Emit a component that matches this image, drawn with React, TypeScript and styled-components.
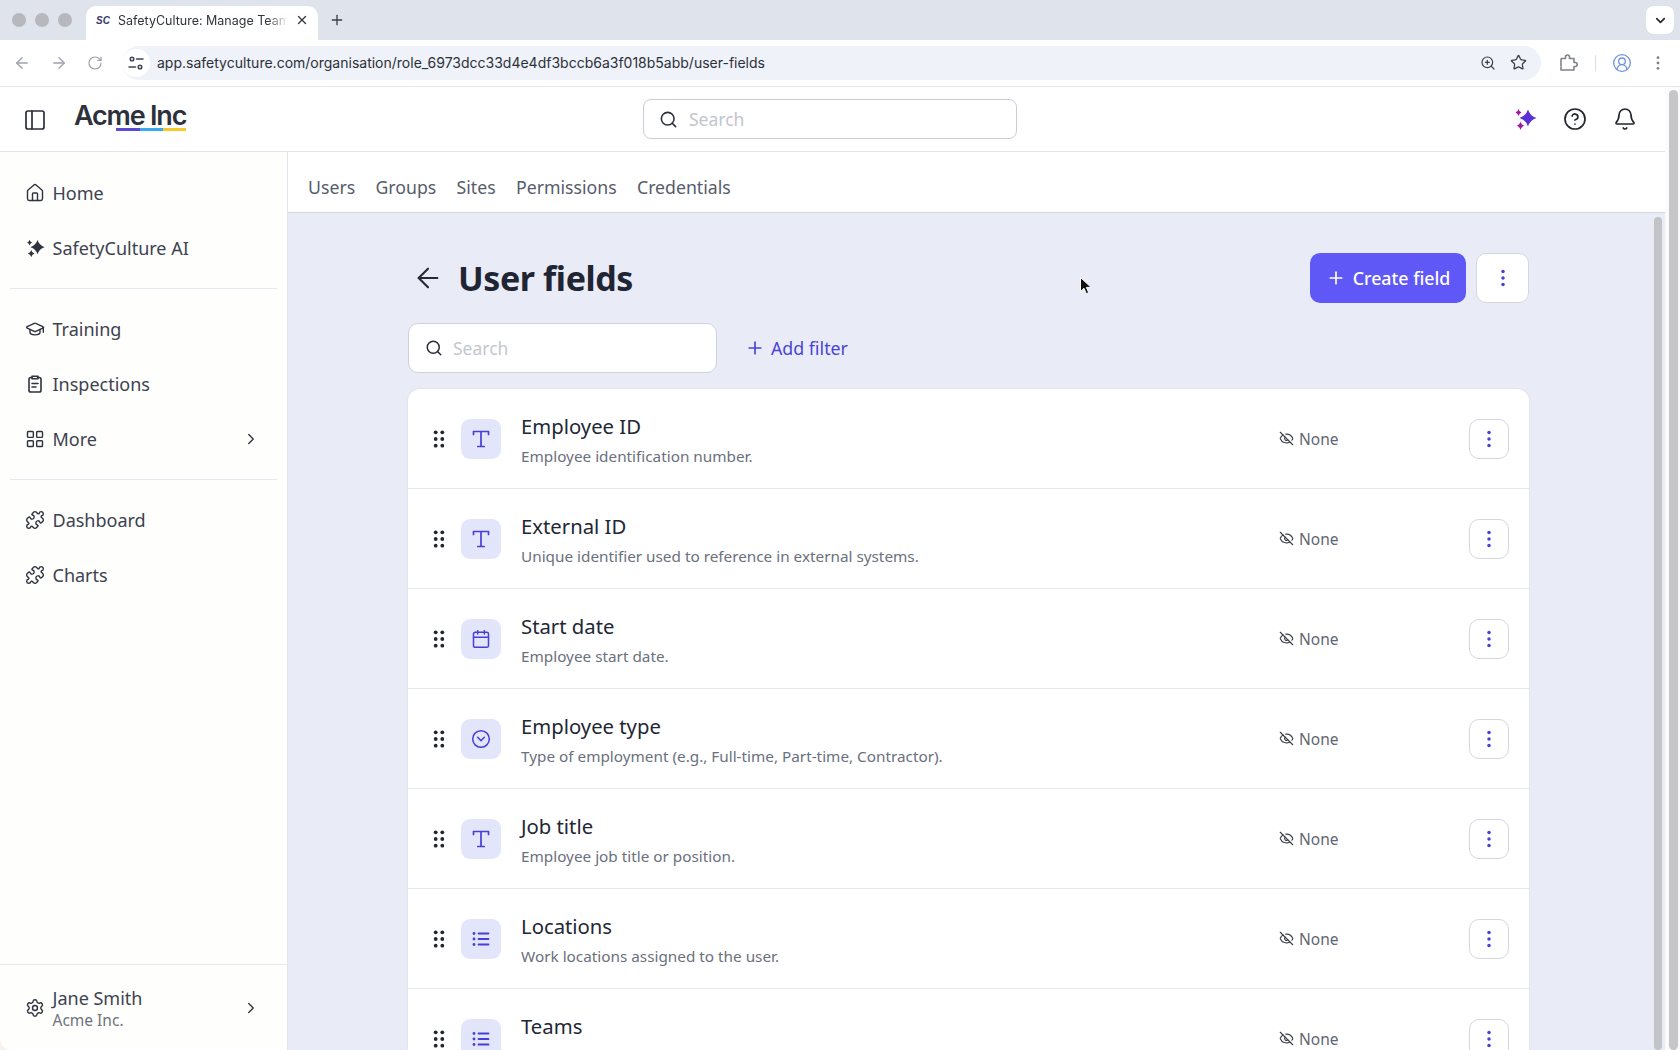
import React from "react";
import styled, { createGlobalStyle } from "styled-components";
import {
  ArrowLeft, ArrowRight, Bell, Calendar, ChevronDown, ChevronRight, CircleChevronDown, CircleHelp, CircleUserRound,
  EyeOff, GraduationCap, House, LayoutGrid, PanelLeft, Plus, Puzzle, RotateCw, Search, Settings,
  Star, X, ZoomIn,
} from "lucide-react";

const Global = createGlobalStyle`
  html, body { margin: 0; padding: 0; height: 100%; overflow: hidden; background: #f6f3ee; }
  #root { height: 100%; }
  * { box-sizing: border-box; }
`;

const Page = styled.div`
  width: 1680px; height: 1050px; display: flex; flex-direction: column; overflow: hidden; position: relative;
  font-family: "Noto Sans", sans-serif; color: #1f2533; background: #fff; border-radius: 0 0 0 12px;
`;

/* browser chrome */
const TabStrip = styled.div`
  height: 40px; flex: none; background: #dfe3ec; display: flex; align-items: flex-end; padding-left: 12px;
`;
const Lights = styled.div`
  display: flex; gap: 9px; align-self: center; width: 74px;
`;
const Light = styled.span`
  width: 14px; height: 14px; border-radius: 50%; background: #b6b8bd;
`;
const BrowserTab = styled.div`
  width: 232px; height: 34px; background: #fff; border-radius: 10px 10px 0 0; display: flex; align-items: center;
  padding: 0 9px 6px 9px; gap: 7px; font: 12.5px "Inter", sans-serif; color: #30343b;
`;
const Favicon = styled.span`
  font: italic 800 10px "Liberation Sans", sans-serif; color: #333a6b; width: 16px; text-align: center;
`;
const TabTitle = styled.span`
  flex: 1; white-space: nowrap; overflow: hidden;
  mask-image: linear-gradient(90deg, #000 88%, transparent);
`;
const NewTab = styled.span`
  display: flex; align-self: center; margin-left: 11px; color: #3a3f47;
`;
const TabMenu = styled.span`
  margin-left: auto; margin-right: 6px; align-self: flex-start; margin-top: 6px; width: 28px; height: 28px; background: #fff;
  border-radius: 8px; display: flex; align-items: center; justify-content: center; color: #23262c;
`;
const Toolbar = styled.div`
  height: 47px; flex: none; background: #fff; border-bottom: 1px solid #e4e7ee; display: flex; align-items: center;
  padding: 0 0 0 13px; color: #9ea3ad;
`;
const NavButtons = styled.div`
  display: flex; align-items: center; gap: 19px; width: 109px; flex: none;
`;
const Omnibox = styled.div`
  width: 1419px; height: 34px; border-radius: 17px; background: #eff2f9; display: flex; align-items: center; padding: 0 14px 1px 0;
  font: 14px "Inter", sans-serif; color: #2c3038;
`;
const SiteInfo = styled.span`
  width: 28px; height: 28px; border-radius: 50%; background: #fff; display: flex; align-items: center; justify-content: center;
  color: #40454e; margin-right: 7px; flex: none;
`;
const Url = styled.span`
  flex: 1; white-space: nowrap;
`;
const UrlActions = styled.span`
  display: flex; align-items: center; gap: 14px; color: #3a3f47;
`;
const ToolbarEnd = styled.div`
  display: flex; align-items: center; margin-left: 17px; color: #7d828b;
`;
const ToolbarSep = styled.span`
  width: 1px; height: 16px; background: #d8dde6; margin: 0 16px 0 17px;
`;
const ChromeKebab = styled.span`
  display: flex; margin-left: 18px;
`;

/* app frame */
const Viewport = styled.div`
  flex: 1; min-height: 0; display: flex;
`;
const AppColumn = styled.div`
  flex: 1; min-width: 0; display: flex; flex-direction: column;
`;
const ScrollGutter = styled.div`
  width: 15px; flex: none; background: #fbfbfd; padding: 3px 2px 0 4px; display: flex;
`;
const Thumb = styled.div`
  width: 9px; height: 100%; border-radius: 5px; background: #c6c6c8;
`;
const AppHeader = styled.header`
  height: 65px; flex: none; border-bottom: 1px solid #e3e5ee; background: #fff; display: flex; align-items: center;
`;
const Brand = styled.div`
  width: 643px; flex: none; display: flex; align-items: center; padding-left: 23px; gap: 27px; color: #2b2f3a;
`;
const PanelIcon = styled(PanelLeft)`
  margin-top: 1px;
`;
const Logo = styled.div`
  position: relative; height: 40px; margin-top: -3px; font: 600 27px/36px "Inter", sans-serif; letter-spacing: -1.2px; color: #2d313b;
`;
const LogoBar = styled.svg`
  position: absolute; left: 42px; bottom: 7px;
`;
const HeaderSearch = styled.div`
  width: 374px; height: 40px; border: 1px solid #c9cdd6; border-radius: 8px; display: flex; align-items: center; gap: 11px;
  padding-left: 15px; font-size: 17.5px; color: #c1c5ce;
`;
const SearchIcon = styled(Search)`
  color: #2a2e38; flex: none;
`;
const HeaderIcons = styled.div`
  margin-left: auto; display: flex; align-items: center; gap: 26px; padding-right: 28px; color: #23262e;
`;
const Body = styled.div`
  flex: 1; min-height: 0; display: flex;
`;
const Sidebar = styled.aside`
  width: 288px; flex: none; border-right: 1px solid #e3e5ee; background: #fefefc; display: flex; flex-direction: column;
  padding-top: 13.5px;
`;
const SideGroup = styled.div`
  margin: 0 10px; display: flex; flex-direction: column;
`;
const SideDivider = styled.div`
  margin: 12px 10px 13px; height: 1px; background: #e6e8f0;
`;
const SideItem = styled.div`
  height: 55px; display: flex; align-items: center; padding: 0 17px 0 15px; gap: 7.5px; font-size: 18px; color: #3d4250;
  svg { flex: none; color: #2f3340; }
`;
const SideLabel = styled.span`
  flex: 1;
`;
const SideFooter = styled.div`
  margin-top: auto; height: 86px; border-top: 1px solid #e6e8f0; display: flex; align-items: center; padding: 0 27px 0 25px; gap: 7.5px;
  svg { flex: none; color: #2f3340; }
`;
const UserBlock = styled.div`
  flex: 1; display: flex; flex-direction: column;
`;
const UserName = styled.span`
  font-size: 18px; line-height: 24px; color: #3d4250;
`;
const UserOrg = styled.span`
  font-size: 15.5px; line-height: 20px; color: #6d7380;
`;
const Main = styled.div`
  flex: 1; min-width: 0; display: flex; flex-direction: column;
`;
const SubNav = styled.nav`
  height: 61px; flex: none; border-bottom: 1px solid #d4d8e4; display: flex; align-items: center; padding: 9px 0 0 20px; gap: 20.3px;
  font-size: 17.7px; color: #565c6b; background: #fff;
`;
const ContentRow = styled.div`
  flex: 1; min-height: 0; display: flex; background: #e9ebf6;
`;
const Content = styled.main`
  flex: 1; min-width: 0; padding: 40px 121px 0 120px; overflow: hidden;
`;
const InnerGutter = styled.div`
  width: 15px; flex: none; padding: 4px 3px 0 4px; display: flex;
`;
const InnerThumb = styled(Thumb)`
  width: 8px; background: #c2c3c7;
`;
const TitleRow = styled.div`
  display: flex; align-items: center; height: 50px;
`;
const BackIcon = styled(ArrowLeft)`
  margin-left: 3.5px; margin-right: 14.5px; color: #262a35; flex: none;
`;
const Title = styled.h1`
  margin: 0; flex: 1; font-size: 34px; font-weight: 700; letter-spacing: -0.4px; color: #1f2533;
`;
const PrimaryButton = styled.button`
  width: 156px; height: 50px; border: 0; border-radius: 10px; background: #5f57f6; color: #fff; display: flex; align-items: center;
  justify-content: center; gap: 7px; font: 500 17.8px "Noto Sans", sans-serif; padding: 0;
`;
const KebabButton = styled.button<{ $large?: boolean }>`
  width: ${(p) => (p.$large ? 53 : 40)}px; height: ${(p) => (p.$large ? 50 : 40)}px; flex: none; margin-left: ${(p) => (p.$large ? 10 : 0)}px;
  border: 1px solid #d5d7e0; border-radius: 10px; background: #fff; display: flex; align-items: center; justify-content: center; padding: 0;
`;
const FilterRow = styled.div`
  display: flex; align-items: center; margin-top: 20px; height: 50px;
`;
const ContentSearch = styled.div`
  width: 309px; height: 50px; border: 1px solid #cfd2de; border-radius: 10px; background: #fff; display: flex; align-items: center; gap: 10px;
  padding-left: 16px; font-size: 17.5px; color: #c4c7d0;
`;
const AddFilter = styled.div`
  margin-left: 28px; display: flex; align-items: center; gap: 6px; color: #4a43d6; font-size: 17.8px;
`;
const Card = styled.section`
  margin-top: 16px; background: #fff; border-radius: 12px 12px 0 0; box-shadow: 0 0 0 1px #e2e4ee;
`;
const Row = styled.div`
  height: 100px; border-bottom: 1px solid #e6e8f0; display: flex; align-items: center; padding: 0 20px 0 21px;
`;
const Grip = styled.svg`
  flex: none; margin-right: 12px; color: #23262e;
`;
const IconBox = styled.span`
  width: 40px; height: 40px; flex: none; border-radius: 9px; background: #e3e5fb; color: #4740d4; display: flex; align-items: center;
  justify-content: center; margin-right: 20px;
`;
const RowText = styled.div`
  flex: 1; min-width: 0; display: flex; flex-direction: column; gap: 2px; padding-top: 4px;
`;
const RowTitle = styled.span`
  font-size: 20.3px; line-height: 28px; color: #232735;
`;
const RowSub = styled.span`
  font-size: 15.3px; line-height: 28px; min-height: 28px; color: #6a707d;
`;
const Visibility = styled.div`
  width: 190px; flex: none; display: flex; align-items: center; gap: 5px; font-size: 15.5px; color: #5f6572;
  svg { color: #3a3e49; }
`;
const Cursor = styled.svg`
  position: absolute; left: 1079px; top: 276px;
`;

const Dots = ({ color = "#4740d4", size = 20 }: { color?: string; size?: number }) => (
  <svg width={size} height={size} viewBox="0 0 20 20" fill={color}>
    <circle cx="10" cy="3.4" r="1.75" /><circle cx="10" cy="10" r="1.75" /><circle cx="10" cy="16.6" r="1.75" />
  </svg>
);
const SerifT = () => (
  <svg width="22" height="22" viewBox="0 0 22 22" fill="none" stroke="currentColor" strokeWidth="1.7" strokeLinecap="round" strokeLinejoin="round">
    <path d="M3.500 6.500V3.500h15v3M11 3.500v15M7.800 18.500h6.400" />
  </svg>
);
const ListGlyph = () => (
  <svg width="20" height="20" viewBox="0 0 20 20" fill="none" stroke="currentColor" strokeWidth="1.800" strokeLinecap="round">
    <path d="M7.500 4.500h10M7.500 10h10M7.500 15.500h10" />
    <g fill="currentColor" stroke="none">
      <circle cx="3" cy="4.500" r="1.400" /><circle cx="3" cy="10" r="1.400" /><circle cx="3" cy="15.500" r="1.400" />
    </g>
  </svg>
);
const Stars = ({ big, small, size = 24 }: { big: string; small: string; size?: number }) => (
  <svg width={size} height={size} viewBox="0 0 24 24">
    <path fill={big} d="M15 2.500Q17 9 23.500 11 17 13 15 19.500 13 13 6.500 11 13 9 15 2.500z" />
    <path fill={small} d="M5.500 2Q6 4.500 8.500 5.500 6 6.500 5.500 9 5 6.500 2.500 5.500 5 4.500 5.500 2zM7.500 14.500Q8.300 18 11.500 18.800 8.300 19.600 7.500 23 6.700 19.600 3.500 18.800 6.700 18 7.500 14.500z" />
  </svg>
);
const Clip = () => (
  <svg width="20" height="20" viewBox="0 0 20 20" fill="none" stroke="currentColor" strokeWidth="1.600" strokeLinecap="round" strokeLinejoin="round">
    <path d="M7 3.500H5.800A1.800 1.800 0 0 0 4 5.300v10.900A1.800 1.800 0 0 0 5.800 18h8.400a1.800 1.800 0 0 0 1.800-1.800V5.300a1.800 1.800 0 0 0-1.800-1.800H13" />
    <path d="M7 2.200h6v2.600H7zM7 9.500h6M7 13h4" />
  </svg>
);
const TuneGlyph = () => (
  <svg width="16" height="16" viewBox="0 0 16 16" fill="none" stroke="currentColor" strokeWidth="1.500" strokeLinecap="round">
    <circle cx="4" cy="4" r="1.800" /><path d="M8.500 4H15M1 12h6.500" /><circle cx="12" cy="12" r="1.800" />
  </svg>
);
const ExtensionGlyph = () => (
  <svg width="20" height="20" viewBox="0 0 20 20" fill="none" stroke="currentColor" strokeWidth="1.600" strokeLinejoin="round">
    <path d="M3 5.500h4.500V4a2 2 0 0 1 4 0v1.500H16v4h1.200a2 2 0 0 1 0 4H16V17H3v-3.500" />
    <path d="M3 13.500V5.500" />
  </svg>
);

type Item = { label: string; icon: React.ReactNode; chevron?: boolean };
const groups: Item[][] = [
  [
    { label: "Home", icon: <House size={20} strokeWidth={1.7} /> },
    { label: "SafetyCulture AI", icon: <Stars big="#2f3340" small="#2f3340" size={20} /> },
  ],
  [
    { label: "Training", icon: <GraduationCap size={20} strokeWidth={1.7} /> },
    { label: "Inspections", icon: <Clip /> },
    { label: "More", icon: <LayoutGrid size={20} strokeWidth={1.7} />, chevron: true },
  ],
  [
    { label: "Dashboard", icon: <Puzzle size={20} strokeWidth={1.7} /> },
    { label: "Charts", icon: <Puzzle size={20} strokeWidth={1.7} /> },
  ],
];

const fields: { title: string; sub: string; icon: React.ReactNode }[] = [
  { title: "Employee ID", sub: "Employee identification number.", icon: <SerifT /> },
  { title: "External ID", sub: "Unique identifier used to reference in external systems.", icon: <SerifT /> },
  { title: "Start date", sub: "Employee start date.", icon: <Calendar size={20} strokeWidth={1.8} /> },
  { title: "Employee type", sub: "Type of employment (e.g., Full-time, Part-time, Contractor).", icon: <CircleChevronDown size={20} strokeWidth={1.8} /> },
  { title: "Job title", sub: "Employee job title or position.", icon: <SerifT /> },
  { title: "Locations", sub: "Work locations assigned to the user.", icon: <ListGlyph /> },
  { title: "Teams", sub: "", icon: <ListGlyph /> },
];

const tabs = ["Users", "Groups", "Sites", "Permissions", "Credentials"];

export default function App() {
  return (
    <Page>
      <Global />
      <TabStrip>
        <Lights><Light /><Light /><Light /></Lights>
        <BrowserTab>
          <Favicon>SC</Favicon>
          <TabTitle>SafetyCulture: Manage Teams</TabTitle>
          <X size={14} strokeWidth={2.2} color="#30343b" />
        </BrowserTab>
        <NewTab><Plus size={16} strokeWidth={2} /></NewTab>
        <TabMenu><ChevronDown size={15} strokeWidth={2.6} /></TabMenu>
      </TabStrip>
      <Toolbar>
        <NavButtons>
          <ArrowLeft size={18} strokeWidth={1.8} />
          <ArrowRight size={18} strokeWidth={1.8} />
          <RotateCw size={16} strokeWidth={1.8} />
        </NavButtons>
        <Omnibox>
          <SiteInfo><TuneGlyph /></SiteInfo>
          <Url>app.safetyculture.com/organisation/role_6973dcc33d4e4df3bccb6a3f018b5abb/user-fields</Url>
          <UrlActions>
            <ZoomIn size={16} strokeWidth={1.8} />
            <Star size={17} strokeWidth={1.8} />
          </UrlActions>
        </Omnibox>
        <ToolbarEnd>
          <ExtensionGlyph />
          <ToolbarSep />
          <CircleUserRound size={20} strokeWidth={1.6} color="#6f95d8" />
          <ChromeKebab><Dots color="#7d828b" size={16} /></ChromeKebab>
        </ToolbarEnd>
      </Toolbar>
      <Viewport>
        <AppColumn>
          <AppHeader>
            <Brand>
              <PanelIcon size={24} strokeWidth={1.7} />
              <Logo>
                Acme Inc
                <LogoBar width="70" height="3" viewBox="0 0 70 3">
                  <rect width="24" height="3" fill="#5a4bd2" />
                  <rect x="24" width="23" height="3" fill="#3ba9ee" />
                  <rect x="47" width="23" height="3" fill="#f5c92a" />
                </LogoBar>
              </Logo>
            </Brand>
            <HeaderSearch>
              <SearchIcon size={19} strokeWidth={2} />
              Search
            </HeaderSearch>
            <HeaderIcons>
              <Stars big="#5a2fd6" small="#a0189f" />
              <CircleHelp size={24} strokeWidth={1.7} />
              <Bell size={24} strokeWidth={1.7} />
            </HeaderIcons>
          </AppHeader>
          <Body>
            <Sidebar>
              {groups.map((g, i) => (
                <React.Fragment key={i}>
                  {i > 0 && <SideDivider />}
                  <SideGroup>
                    {g.map((it) => (
                      <SideItem key={it.label}>
                        {it.icon}
                        <SideLabel>{it.label}</SideLabel>
                        {it.chevron && <ChevronRight size={18} strokeWidth={1.8} />}
                      </SideItem>
                    ))}
                  </SideGroup>
                </React.Fragment>
              ))}
              <SideFooter>
                <Settings size={20} strokeWidth={1.7} />
                <UserBlock>
                  <UserName>Jane Smith</UserName>
                  <UserOrg>Acme Inc.</UserOrg>
                </UserBlock>
                <ChevronRight size={18} strokeWidth={1.8} />
              </SideFooter>
            </Sidebar>
            <Main>
              <SubNav>
                {tabs.map((t) => <span key={t}>{t}</span>)}
              </SubNav>
              <ContentRow>
                <Content>
                  <TitleRow>
                    <BackIcon size={32} strokeWidth={1.6} />
                    <Title>User fields</Title>
                    <PrimaryButton><Plus size={20} strokeWidth={2} />Create field</PrimaryButton>
                    <KebabButton $large><Dots /></KebabButton>
                  </TitleRow>
                  <FilterRow>
                    <ContentSearch>
                      <SearchIcon size={18} strokeWidth={2} />
                      Search
                    </ContentSearch>
                    <AddFilter><Plus size={20} strokeWidth={2} />Add filter</AddFilter>
                  </FilterRow>
                  <Card>
                    {fields.map((f) => (
                      <Row key={f.title}>
                        <Grip width="20" height="20" viewBox="0 0 20 20" fill="currentColor">
                          {[3.3, 10, 16.7].map((y) => (
                            <React.Fragment key={y}>
                              <circle cx="6.700" cy={y} r="1.900" />
                              <circle cx="13.300" cy={y} r="1.900" />
                            </React.Fragment>
                          ))}
                        </Grip>
                        <IconBox>{f.icon}</IconBox>
                        <RowText>
                          <RowTitle>{f.title}</RowTitle>
                          <RowSub>{f.sub}</RowSub>
                        </RowText>
                        <Visibility><EyeOff size={15} strokeWidth={1.8} />None</Visibility>
                        <KebabButton><Dots /></KebabButton>
                      </Row>
                    ))}
                  </Card>
                </Content>
                <InnerGutter><InnerThumb /></InnerGutter>
              </ContentRow>
            </Main>
          </Body>
        </AppColumn>
        <ScrollGutter><Thumb /></ScrollGutter>
      </Viewport>
      <Cursor width="14" height="20" viewBox="0 0 14 20">
        <path d="M1.500 1.500v14l3.500-3.200 2.300 5.400 2.400-1-2.300-5.300h4.800z" fill="#111" stroke="#fff" strokeWidth="1" />
      </Cursor>
    </Page>
  );
}
